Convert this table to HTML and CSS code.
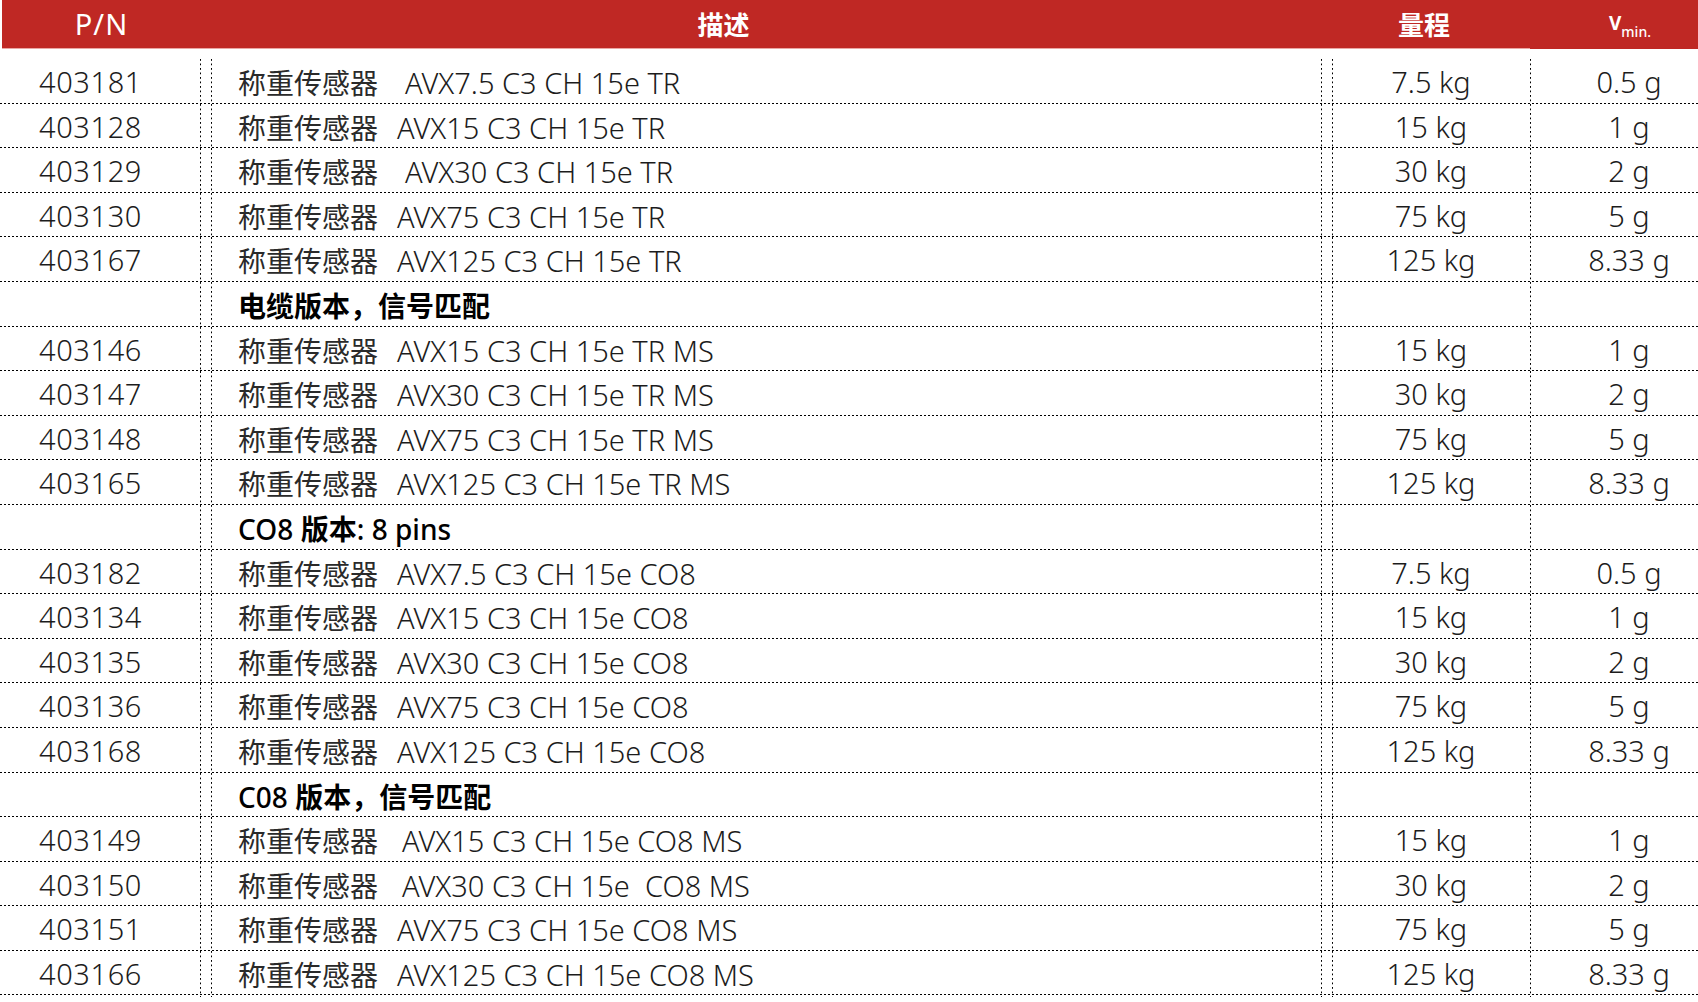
FILE: index.html
```html
<!DOCTYPE html>
<html lang="zh-CN">
<head>
<meta charset="utf-8">
<title>称重传感器</title>
<link rel="stylesheet" href="styles.css">
</head>
<body>
<div class="sheet">
  <div class="head">
    <div class="h-pn">P/N</div>
    <div class="sp"></div>
    <div class="h-desc">描述</div>
    <div class="sp"></div>
    <div class="h-range">量程</div>
    <div class="h-v"><span class="v">V</span><span class="sub">min.</span></div>
  </div>
  <div class="body">
    <div class="row"><div class="c pn">403181</div><div class="sp"></div><div class="c desc"><span class="cn">称重传感器</span><span class="m wide">AVX7.5 C3 CH 15e TR</span></div><div class="sp"></div><div class="c rng">7.5 kg</div><div class="c vm">0.5 g</div></div>
    <div class="row"><div class="c pn">403128</div><div class="sp"></div><div class="c desc"><span class="cn">称重传感器</span><span class="m">AVX15 C3 CH 15e TR</span></div><div class="sp"></div><div class="c rng">15 kg</div><div class="c vm">1 g</div></div>
    <div class="row"><div class="c pn">403129</div><div class="sp"></div><div class="c desc"><span class="cn">称重传感器</span><span class="m wide">AVX30 C3 CH 15e TR</span></div><div class="sp"></div><div class="c rng">30 kg</div><div class="c vm">2 g</div></div>
    <div class="row"><div class="c pn">403130</div><div class="sp"></div><div class="c desc"><span class="cn">称重传感器</span><span class="m">AVX75 C3 CH 15e TR</span></div><div class="sp"></div><div class="c rng">75 kg</div><div class="c vm">5 g</div></div>
    <div class="row"><div class="c pn">403167</div><div class="sp"></div><div class="c desc"><span class="cn">称重传感器</span><span class="m">AVX125 C3 CH 15e TR</span></div><div class="sp"></div><div class="c rng">125 kg</div><div class="c vm">8.33 g</div></div>
    <div class="row"><div class="c pn"></div><div class="sp"></div><div class="c desc sec"><span class="cnb">电缆版本，信号匹配</span></div><div class="sp"></div><div class="c rng"></div><div class="c vm"></div></div>
    <div class="row"><div class="c pn">403146</div><div class="sp"></div><div class="c desc"><span class="cn">称重传感器</span><span class="m">AVX15 C3 CH 15e TR MS</span></div><div class="sp"></div><div class="c rng">15 kg</div><div class="c vm">1 g</div></div>
    <div class="row"><div class="c pn">403147</div><div class="sp"></div><div class="c desc"><span class="cn">称重传感器</span><span class="m">AVX30 C3 CH 15e TR MS</span></div><div class="sp"></div><div class="c rng">30 kg</div><div class="c vm">2 g</div></div>
    <div class="row"><div class="c pn">403148</div><div class="sp"></div><div class="c desc"><span class="cn">称重传感器</span><span class="m">AVX75 C3 CH 15e TR MS</span></div><div class="sp"></div><div class="c rng">75 kg</div><div class="c vm">5 g</div></div>
    <div class="row"><div class="c pn">403165</div><div class="sp"></div><div class="c desc"><span class="cn">称重传感器</span><span class="m">AVX125 C3 CH 15e TR MS</span></div><div class="sp"></div><div class="c rng">125 kg</div><div class="c vm">8.33 g</div></div>
    <div class="row"><div class="c pn"></div><div class="sp"></div><div class="c desc sec"><span class="lb">CO8</span> <span class="cnb">版本</span><span class="lb">: 8 pins</span></div><div class="sp"></div><div class="c rng"></div><div class="c vm"></div></div>
    <div class="row"><div class="c pn">403182</div><div class="sp"></div><div class="c desc"><span class="cn">称重传感器</span><span class="m">AVX7.5 C3 CH 15e CO8</span></div><div class="sp"></div><div class="c rng">7.5 kg</div><div class="c vm">0.5 g</div></div>
    <div class="row"><div class="c pn">403134</div><div class="sp"></div><div class="c desc"><span class="cn">称重传感器</span><span class="m">AVX15 C3 CH 15e CO8</span></div><div class="sp"></div><div class="c rng">15 kg</div><div class="c vm">1 g</div></div>
    <div class="row"><div class="c pn">403135</div><div class="sp"></div><div class="c desc"><span class="cn">称重传感器</span><span class="m">AVX30 C3 CH 15e CO8</span></div><div class="sp"></div><div class="c rng">30 kg</div><div class="c vm">2 g</div></div>
    <div class="row"><div class="c pn">403136</div><div class="sp"></div><div class="c desc"><span class="cn">称重传感器</span><span class="m">AVX75 C3 CH 15e CO8</span></div><div class="sp"></div><div class="c rng">75 kg</div><div class="c vm">5 g</div></div>
    <div class="row"><div class="c pn">403168</div><div class="sp"></div><div class="c desc"><span class="cn">称重传感器</span><span class="m">AVX125 C3 CH 15e CO8</span></div><div class="sp"></div><div class="c rng">125 kg</div><div class="c vm">8.33 g</div></div>
    <div class="row"><div class="c pn"></div><div class="sp"></div><div class="c desc sec"><span class="lb">C08</span> <span class="cnb">版本，信号匹配</span></div><div class="sp"></div><div class="c rng"></div><div class="c vm"></div></div>
    <div class="row"><div class="c pn">403149</div><div class="sp"></div><div class="c desc"><span class="cn">称重传感器</span><span class="m semi">AVX15 C3 CH 15e CO8 MS</span></div><div class="sp"></div><div class="c rng">15 kg</div><div class="c vm">1 g</div></div>
    <div class="row"><div class="c pn">403150</div><div class="sp"></div><div class="c desc"><span class="cn">称重传感器</span><span class="m semi">AVX30 C3 CH 15e&nbsp; CO8 MS</span></div><div class="sp"></div><div class="c rng">30 kg</div><div class="c vm">2 g</div></div>
    <div class="row"><div class="c pn">403151</div><div class="sp"></div><div class="c desc"><span class="cn">称重传感器</span><span class="m">AVX75 C3 CH 15e CO8 MS</span></div><div class="sp"></div><div class="c rng">75 kg</div><div class="c vm">5 g</div></div>
    <div class="row"><div class="c pn">403166</div><div class="sp"></div><div class="c desc"><span class="cn">称重传感器</span><span class="m">AVX125 C3 CH 15e CO8 MS</span></div><div class="sp"></div><div class="c rng">125 kg</div><div class="c vm">8.33 g</div></div>
  </div>
</div>
</body>
</html>
```
FILE: styles.css
```css
html, body {
  margin: 0;
  padding: 0;
  background: #ffffff;
}
body {
  width: 1698px;
  height: 1002px;
  overflow: hidden;
  font-family: "Noto Sans", "Noto Sans CJK SC", sans-serif;
  color: #1c1c1c;
}
.sheet {
  padding-left: 2px;
}
.head,
.row {
  display: grid;
  grid-template-columns: 199px 10px 1111px 10px 198px 168px;
}
.head {
  height: 49px;
  margin-right: -2px;
  background-color: #bf2824;
  background-image: linear-gradient(#eaa7a4, #eaa7a4);
  background-size: 1528px 1px;
  background-position: 0 100%;
  background-repeat: no-repeat;
  color: #ffffff;
  align-items: center;
}
.h-pn {
  text-align: center;
  font-size: 29px;
  font-weight: 400;
  letter-spacing: 1px;
  padding-bottom: 2px;
}
.h-desc,
.h-range {
  font-family: "Noto Sans CJK SC", sans-serif;
  font-weight: 700;
  font-size: 26px;
  text-align: center;
  padding-bottom: 2px;
}
.h-desc {
  padding-right: 86px;
}
.h-range {
  padding-right: 14px;
}
.h-v {
  text-align: center;
  padding-left: 32px;
  padding-bottom: 4px;
}
.h-v .v {
  font-size: 19px;
  font-weight: 700;
}
.h-v .sub {
  font-size: 14px;
  font-weight: 500;
  position: relative;
  top: 7px;
}
.body {
  margin-top: 10px;
}
.row {
  height: 44.6px;
  background-image: linear-gradient(to right, #000000 2px, transparent 2px);
  background-size: 4px 1px;
  background-repeat: repeat-x;
  background-position: 0 100%;
  margin-left: -2px;
  padding-left: 2px;
}
.c {
  font-size: 29px;
  font-weight: 300;
  line-height: 44px;
  white-space: nowrap;
  padding-top: 1px;
  background-size: 1px 4.5px;
  background-repeat: repeat-y;
}
.pn {
  padding-left: 37px;
  letter-spacing: 0.6px;
  background-image: linear-gradient(#000000 2px, transparent 2px);
  background-position: 100% 0;
}
.desc {
  padding-left: 27px;
  background-image: linear-gradient(#000000 2px, transparent 2px), linear-gradient(#000000 2px, transparent 2px);
  background-position: 0 0, 100% 0;
  background-size: 1px 4.5px, 1px 4.5px;
  background-repeat: repeat-y, repeat-y;
}
.rng {
  text-align: center;
  background-image: linear-gradient(#000000 2px, transparent 2px);
  background-position: 0 0;
}
.vm {
  text-align: center;
  padding-left: 30px;
  background-image: linear-gradient(#000000 2px, transparent 2px);
  background-position: 0 0;
}
.cn {
  font-family: "Noto Sans CJK SC", sans-serif;
  font-size: 28px;
  font-weight: 400;
  color: #2a2a2a;
  margin-right: 19px;
}
.m.wide {
  margin-left: 8px;
}
.m.semi {
  margin-left: 5px;
}
.sec {
  color: #000000;
}
.cnb {
  font-family: "Noto Sans CJK SC", sans-serif;
  font-size: 28px;
  font-weight: 700;
}
.lb {
  font-weight: 500;
  font-size: 28px;
}
```
